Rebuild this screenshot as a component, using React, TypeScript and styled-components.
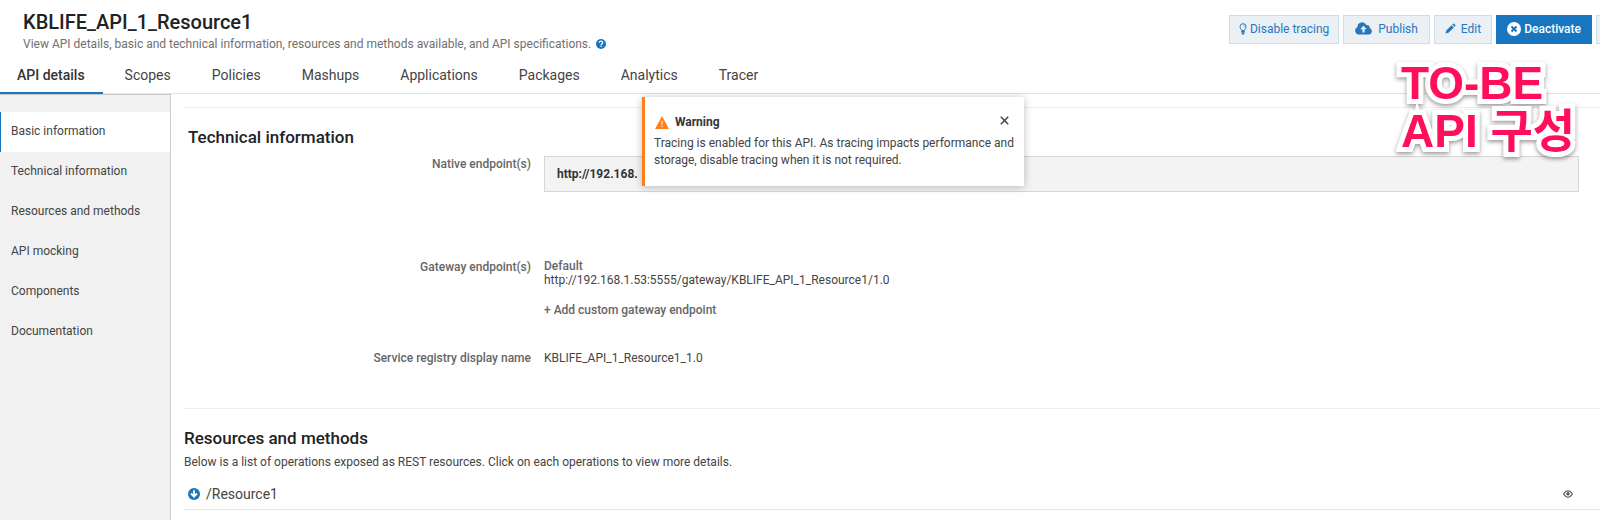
import React from "react";
import styled, { createGlobalStyle, css } from "styled-components";

const blue = "#1776bf";

const GlobalStyle = createGlobalStyle`
  * { box-sizing: border-box; }
  body {
    margin: 0;
    background: #fff;
    color: #444;
    font-family: Roboto, "Noto Sans CJK KR", sans-serif;
    font-size: 12px;
    line-height: 16px;
  }
  h1, h2, p, ul, dl, dd { margin: 0; padding: 0; }
  button { font-family: inherit; cursor: pointer; }
  svg { display: block; flex: none; }
`;

const Page = styled.div`
  position: relative;
  display: flex;
  flex-direction: column;
  min-height: 100vh;
  overflow: hidden;
`;

const Header = styled.header`
  display: flex;
  justify-content: space-between;
  align-items: flex-start;
  padding-left: 23px;
`;

const Title = styled.h1`
  padding-top: 10px;
  font-size: 20px;
  line-height: 24px;
  font-weight: 500;
  color: #222;
`;

const Subtitle = styled.p`
  display: flex;
  align-items: center;
  gap: 5px;
  padding-top: 2px;
  color: #707070;
`;

const IconButton = styled.button`
  display: flex;
  align-items: center;
  justify-content: center;
  border: 0;
  padding: 0;
  background: none;
  color: ${blue};
`;

const Actions = styled.div`
  display: flex;
  gap: 4px;
  padding-top: 15px;
`;

const ActionButton = styled.button<{ $primary?: boolean; $gap?: number; $pad?: number }>`
  display: flex;
  align-items: center;
  gap: ${(p) => p.$gap ?? 3}px;
  height: 29px;
  padding: 0 ${(p) => p.$pad ?? 10}px 2px;
  border: 1px solid #c9dfe8;
  background: #ebf0f5;
  color: #2777bd;
  font-size: 12px;
  white-space: nowrap;
  ${(p) =>
    p.$primary &&
    css`
      border-color: ${blue};
      background: ${blue};
      color: #fff;
      font-weight: 500;
    `}
`;

const OverflowButton = styled.button`
  width: 4px;
  height: 29px;
  padding: 0;
  border: 1px solid #c9dfe8;
  border-right: 0;
  background: #ebf0f5;
`;

const Tabs = styled.nav`
  display: flex;
  height: 32px;
  margin-top: 10px;
  border-bottom: 1px solid #e2e2e2;
`;

const Tab = styled.a<{ $active?: boolean }>`
  height: 32px;
  padding: 3px 19px 0 22px;
  font-size: 14px;
  line-height: 20px;
  color: #444;
  text-decoration: none;
  ${(p) =>
    p.$active &&
    css`
      padding: 3px 18px 0 17px;
      border-bottom: 2px solid ${blue};
      color: #333;
      font-weight: 500;
    `}
`;

const Body = styled.div`
  display: flex;
  flex: 1;
`;

const Sidebar = styled.nav`
  flex: none;
  width: 171px;
  padding-top: 17px;
  border-top: 1px solid #ccc;
  border-right: 1px solid #ccc;
  background: #f1f1f1;
`;

const SideLink = styled.a<{ $active?: boolean }>`
  display: block;
  padding: 11px 0 13px 11px;
  color: #444;
  text-decoration: none;
  ${(p) =>
    p.$active &&
    css`
      padding-left: 10px;
      border-left: 1px solid ${blue};
      background: #fff;
    `}
`;

const Content = styled.main`
  flex: 1;
  min-width: 0;
  padding: 13px 0 0 13px;
`;

const Section = styled.section`
  border-top: 1px solid #eee;
`;

const SectionTitle = styled.h2<{ $inset?: boolean }>`
  padding: 18px 0 0 ${(p) => (p.$inset ? 4 : 0)}px;
  font-size: 17px;
  line-height: 22px;
  font-weight: 500;
  color: #222;
`;

const Details = styled.dl`
  display: grid;
  grid-template-columns: 347px 1fr;
  column-gap: 13px;
  padding: 8px 21px 42px 0;
`;

const Term = styled.dt`
  text-align: right;
  font-weight: 500;
  color: #666;
`;

const Value = styled.dd`
  min-width: 0;
`;

const EndpointBox = styled.div`
  height: 36px;
  margin-bottom: 67px;
  padding: 9px 12px;
  border: 1px solid #d6d6d6;
  background: #f3f3f3;
  font-weight: 700;
  color: #333;
`;

const GatewayEndpoint = styled.div`
  line-height: 14px;
`;

const Strong = styled.div`
  font-weight: 500;
  color: #666;
`;

const AddButton = styled.button`
  display: block;
  margin: 15px 0 32px;
  padding: 0;
  border: 0;
  background: none;
  font-size: 12px;
  line-height: 16px;
  font-weight: 500;
  color: #666;
`;

const Description = styled.p`
  padding-top: 5px;
`;

const ResourceRow = styled.div`
  display: flex;
  align-items: center;
  justify-content: space-between;
  height: 32px;
  margin-top: 8px;
  padding: 0 27px 0 4px;
  border-bottom: 1px solid #e6e6e6;
`;

const ResourceLink = styled.a`
  display: flex;
  align-items: center;
  gap: 6px;
  font-size: 14px;
  color: #444;
  text-decoration: none;
`;

const Toast = styled.div`
  position: absolute;
  top: 97px;
  left: calc(50% - 158px);
  width: 382px;
  height: 89px;
  padding: 15px 7px 0 9px;
  border-left: 3px solid #ff7f1e;
  background: #fff;
  box-shadow: 0 1px 8px rgba(0, 0, 0, 0.25);
  line-height: 17px;
`;

const ToastHead = styled.div`
  display: flex;
  align-items: center;
  gap: 6px;
  height: 20px;
  margin-bottom: 3px;
  padding: 0 5px 0 1px;
  font-weight: 700;
  color: #333;
`;

const CloseButton = styled(IconButton)`
  width: 16px;
  height: 20px;
  padding-bottom: 4px;
  margin-left: auto;
  color: #444;
`;

const Annotation = styled.div`
  position: absolute;
  top: 59px;
  right: 23px;
  width: 176px;
  font-family: "Liberation Sans", "Noto Sans CJK KR", sans-serif;
  font-size: 46px;
  line-height: 48px;
  font-weight: 700;
  color: #ff0f5b;
  white-space: nowrap;
  -webkit-text-stroke: 10px #fff;
  paint-order: stroke fill;
  stroke-linejoin: round;
  filter: drop-shadow(0 2px 2px rgba(0, 0, 0, 0.4));
  pointer-events: none;
`;

const HelpIcon = () => (
  <svg width="10" height="10" viewBox="0 0 12 12">
    <circle cx="6" cy="6" r="6" fill="currentColor" />
    <path d="M4 4.6C4 3.2 5 2.6 6 2.6s2.1.6 2.1 1.8C8.100 5.700 6.100 5.600 6.100 7.100" fill="none" stroke="#fff" strokeWidth="1.400" />
    <rect x="5.300" y="8" width="1.600" height="1.600" fill="#fff" />
  </svg>
);

const BulbIcon = () => (
  <svg width="8" height="12" viewBox="0 0 8 12" fill="none" stroke="currentColor">
    <path d="M2.600 7.500C2.300 6.200 1 5.500 1 3.700a3 3 0 0 1 6 0C7 5.500 5.700 6.200 5.400 7.500Z" />
    <path d="M4.500 2.300q1 .2 1 1.200" strokeWidth=".7" />
    <path d="M2.300 8.500h3.400M2.300 9.800h3.400M3 11h2" strokeWidth="1.200" />
  </svg>
);

const CloudIcon = () => (
  <svg width="18" height="13" viewBox="0 0 18 13" fill="currentColor">
    <path
      fillRule="evenodd"
      d="M4.200 12.500A4 4 0 0 1 2.400 4.900 4.700 4.700 0 0 1 11.300 3a2.700 2.700 0 0 1 3.400 3 3.400 3.400 0 0 1-.6 6.500ZM8.500 3.800 5.300 7.200h2.100v3.200h2.200V7.200h2.100Z"
    />
  </svg>
);

const PencilIcon = () => (
  <svg width="11" height="11" viewBox="0 0 11 11" fill="currentColor">
    <path d="m.5 10.500.8-3L6.600 2.200 8.800 4.400 3.500 9.700ZM7.300 1.500l.8-.8q.5-.5 1 0l1.200 1.200q.5.5 0 1l-.8.8Z" />
  </svg>
);

const CancelIcon = () => (
  <svg width="14" height="14" viewBox="0 0 14 14">
    <circle cx="7" cy="7" r="7" fill="#fff" />
    <path d="m4.500 4.500 5 5m0-5-5 5" stroke={blue} strokeWidth="2" />
  </svg>
);

const WarningIcon = () => (
  <svg width="14" height="13" viewBox="0 0 14 13">
    <path d="M7 0 14 13H0Z" fill="#ff7f1e" />
    <path d="M7 4.800v3.800M7 9.700v1.400" stroke="#ffe3c9" strokeWidth="1.400" />
  </svg>
);

const CloseIcon = () => (
  <svg width="9" height="9" viewBox="0 0 8 8">
    <path d="m.7.7 6.600 6.600M7.300.7.7 7.300" stroke="currentColor" strokeWidth="1.300" />
  </svg>
);

const ArrowIcon = () => (
  <svg width="12" height="12" viewBox="0 0 12 12">
    <circle cx="6" cy="6" r="6" fill={blue} />
    <path d="M6 2.300v6M3 5.500 6 8.600l3-3.100" fill="none" stroke="#fff" strokeWidth="1.800" />
  </svg>
);

const EyeIcon = () => (
  <svg width="10" height="8" viewBox="0 0 10 8">
    <path d="M.6 4Q2.500.8 5 .8T9.400 4Q7.500 7.200 5 7.200T.6 4Z" fill="none" stroke="#555" strokeWidth="1.100" />
    <circle cx="5" cy="3.800" r="1.700" fill="#555" />
  </svg>
);

const tabs = ["API details", "Scopes", "Policies", "Mashups", "Applications", "Packages", "Analytics", "Tracer"];
const sections = [
  "Basic information",
  "Technical information",
  "Resources and methods",
  "API mocking",
  "Components",
  "Documentation",
];

export default function App() {
  return (
    <Page>
      <GlobalStyle />
      <Header>
        <div>
          <Title>KBLIFE_API_1_Resource1</Title>
          <Subtitle>
            View API details, basic and technical information, resources and methods available, and API specifications.
            <IconButton aria-label="Help">
              <HelpIcon />
            </IconButton>
          </Subtitle>
        </div>
        <Actions>
          <ActionButton $pad={9}>
            <BulbIcon />
            Disable tracing
          </ActionButton>
          <ActionButton $gap={5} $pad={11}>
            <CloudIcon />
            Publish
          </ActionButton>
          <ActionButton $gap={5}>
            <PencilIcon />
            Edit
          </ActionButton>
          <ActionButton $primary>
            <CancelIcon />
            Deactivate
          </ActionButton>
          <OverflowButton aria-label="More actions" />
        </Actions>
      </Header>
      <Tabs>
        {tabs.map((t, i) => (
          <Tab key={t} href="#" $active={i === 0}>
            {t}
          </Tab>
        ))}
      </Tabs>
      <Body>
        <Sidebar>
          {sections.map((s, i) => (
            <SideLink key={s} href="#" $active={i === 0}>
              {s}
            </SideLink>
          ))}
        </Sidebar>
        <Content>
          <Section>
            <SectionTitle $inset>Technical information</SectionTitle>
            <Details>
              <Term>Native endpoint(s)</Term>
              <Value>
                <EndpointBox>http://192.168.</EndpointBox>
              </Value>
              <Term>Gateway endpoint(s)</Term>
              <Value>
                <GatewayEndpoint>
                  <Strong>Default</Strong>
                  http://192.168.1.53:5555/gateway/KBLIFE_API_1_Resource1/1.0
                </GatewayEndpoint>
                <AddButton>+ Add custom gateway endpoint</AddButton>
              </Value>
              <Term>Service registry display name</Term>
              <Value>KBLIFE_API_1_Resource1_1.0</Value>
            </Details>
          </Section>
          <Section>
            <SectionTitle>Resources and methods</SectionTitle>
            <Description>
              Below is a list of operations exposed as REST resources. Click on each operations to view more details.
            </Description>
            <ResourceRow>
              <ResourceLink href="#">
                <ArrowIcon />
                /Resource1
              </ResourceLink>
              <IconButton aria-label="View">
                <EyeIcon />
              </IconButton>
            </ResourceRow>
          </Section>
        </Content>
      </Body>
      <Toast role="alert">
        <ToastHead>
          <WarningIcon />
          Warning
          <CloseButton aria-label="Close">
            <CloseIcon />
          </CloseButton>
        </ToastHead>
        Tracing is enabled for this API. As tracing impacts performance and storage, disable tracing when it is not
        required.
      </Toast>
      <Annotation>
        TO-BE
        <br />
        API 구성
      </Annotation>
    </Page>
  );
}
